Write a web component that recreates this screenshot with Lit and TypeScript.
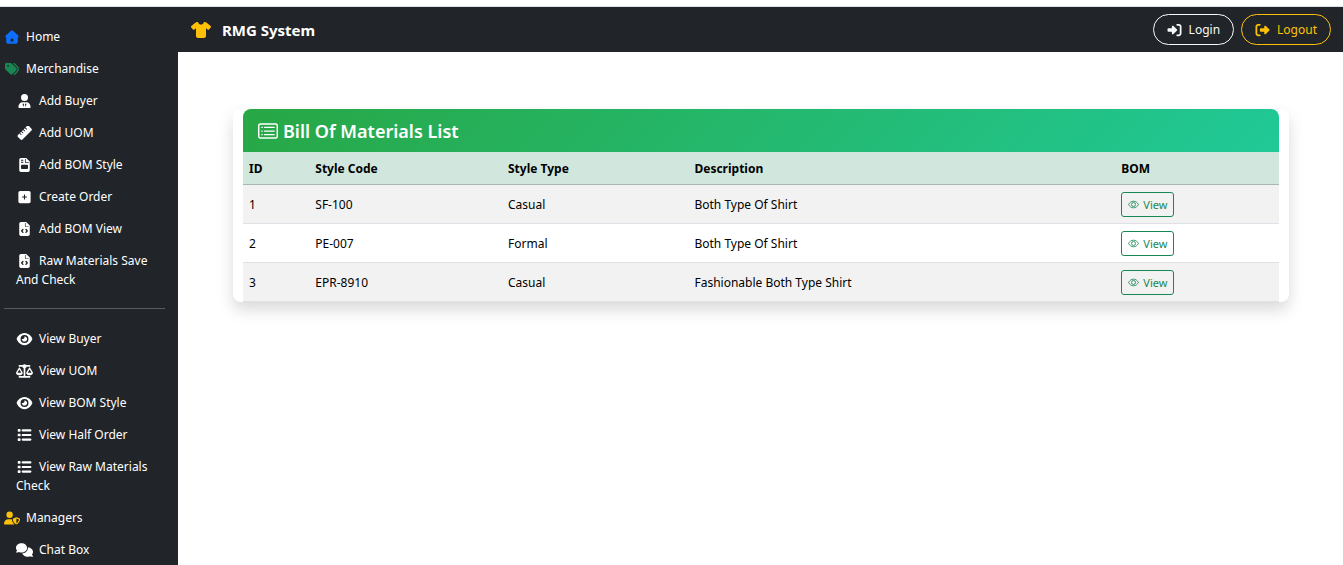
import { LitElement, html, css, svg, type SVGTemplateResult } from "lit";
import { customElement } from "lit/decorators.js";
import { classMap } from "lit/directives/class-map.js";

interface Icon {
  box: string;
  art: SVGTemplateResult;
}

const icons: Record<string, Icon> = {
  home: {
    box: "0 0 16 16",
    art: svg`<path fill-rule="evenodd" d="M8 .5c.4 0 .8.1 1.100.4l6 5.500c.8.7.5 1.900-.5 2.100v5.300c0 1-.8 1.800-1.800 1.800H3.200c-1 0-1.800-.8-1.800-1.800V8.500C.4 8.300.1 7.100.9 6.400l6-5.500C7.200.6 7.600.5 8 .5zM8 9.600a1.600 1.600 0 0 0-1.600 1.600v1.900h3.200v-1.900A1.600 1.600 0 0 0 8 9.600z"/>`,
  },
  tags: {
    box: "0 0 512 512",
    art: svg`<path d="M345 39.100 472.800 168.400c52.400 53 52.400 138.200 0 191.200L360.800 472.900c-9.300 9.400-24.500 9.500-33.900.2s-9.500-24.500-.2-33.900L438.600 325.900c33.900-34.300 33.900-89.400 0-123.700L310.900 72.900c-9.300-9.400-9.200-24.600.2-33.900s24.600-9.200 33.900.1zM0 229.500V80c0-26.500 21.500-48 48-48h149.500c17 0 33.300 6.700 45.300 18.700l168 168c25 25 25 65.500 0 90.500L277.300 442.700c-25 25-65.500 25-90.500 0l-168-168C6.700 262.700 0 246.500 0 229.500zM144 144a32 32 0 1 0-64 0 32 32 0 1 0 64 0z"/>`,
  },
  user: {
    box: "0 0 448 512",
    art: svg`<path fill-rule="evenodd" d="M96 128a128 128 0 1 0 256 0A128 128 0 1 0 96 128zM150 304h148c84 0 150 76 150 177.300 0 17-13.700 30.700-30.700 30.700H30.700C13.700 512 0 498.300 0 481.300 0 380 66 304 150 304zm2 50 28 118 26-84-22-44zm144 0-32-10-22 44 26 84z"/>`,
  },
  ruler: {
    box: "4 16 488 492",
    art: svg`<path d="M177.900 494.100c-18.700 18.700-49.100 18.700-67.900 0L17.900 401.900c-18.700-18.700-18.700-49.100 0-67.900l50.700-50.700 48 48c6.200 6.200 16.400 6.200 22.600 0s6.200-16.400 0-22.600l-48-48 41.400-41.400 48 48c6.200 6.200 16.400 6.200 22.600 0s6.200-16.400 0-22.600l-48-48 41.400-41.400 48 48c6.200 6.200 16.400 6.200 22.600 0s6.200-16.400 0-22.600l-48-48 41.400-41.400 48 48c6.200 6.200 16.400 6.200 22.600 0s6.200-16.400 0-22.600l-48-48 50.700-50.700c18.700-18.700 49.100-18.700 67.900 0l92.100 92.100c18.700 18.700 18.700 49.100 0 67.900L177.900 494.100z"/>`,
  },
  invoice: {
    box: "0 0 384 512",
    art: svg`<path fill-rule="evenodd" d="M64 0C28.700 0 0 28.700 0 64v384c0 35.300 28.700 64 64 64h256c35.300 0 64-28.700 64-64V128L256 0H64zM236 36v108h112v28H208V36zM64 64h84v32H64zm0 74h84v32H64zm32 108h192c18 0 32 14 32 32v96c0 18-14 32-32 32H96c-18 0-32-14-32-32v-96c0-18 14-32 32-32z"/>`,
  },
  plus: {
    box: "0 0 448 512",
    art: svg`<path fill-rule="evenodd" d="M64 32C28.700 32 0 60.700 0 96v320c0 35.300 28.700 64 64 64h320c35.300 0 64-28.700 64-64V96c0-35.300-28.700-64-64-64H64zm140 312v-68h-68v-40h68v-68h40v68h68v40h-68v68z"/>`,
  },
  code: {
    box: "0 0 384 512",
    art: svg`<path fill-rule="evenodd" d="M64 0C28.700 0 0 28.700 0 64v384c0 35.300 28.700 64 64 64h256c35.300 0 64-28.700 64-64V128L256 0H64zM232 40v112h112v24H208V40zM153 289l-31 39 31 39c8 10 6 25-4 34s-25 6-34-4l-48-56c-7-9-7-19 0-28l48-56c9-10 24-12 34-4s12 26 4 36zm112-32 48 56c7 9 7 19 0 28l-48 56c-9 10-24 12-34 4s-12-24-4-34l31-39-31-39c-8-10-6-25 4-34s25-8 34 2z"/>`,
  },
  eye: {
    box: "0 0 576 512",
    art: svg`<path d="M288 32c-80.800 0-145.500 36.800-192.600 80.600C48.600 156 17.300 208 2.500 243.700c-3.300 7.900-3.300 16.700 0 24.600C17.300 304 48.600 356 95.400 399.400 142.500 443.200 207.200 480 288 480s145.500-36.800 192.600-80.600c46.800-43.500 78.100-95.400 93-131.100 3.300-7.900 3.300-16.700 0-24.600-14.900-35.700-46.200-87.700-93-131.100C433.500 68.800 368.800 32 288 32zM144 256a144 144 0 1 1 288 0 144 144 0 1 1-288 0zm144-64c0 35.300-28.700 64-64 64-7.100 0-13.900-1.200-20.300-3.300-5.500-1.800-11.900 1.600-11.700 7.400.3 6.900 1.300 13.800 3.200 20.700 13.700 51.200 66.400 81.600 117.600 67.900s81.600-66.400 67.900-117.600c-11.100-41.500-47.800-69.400-88.600-71.100-5.800-.2-9.200 6.100-7.400 11.700 2.100 6.400 3.300 13.200 3.300 20.300z"/>`,
  },
  scale: {
    box: "0 0 640 512",
    art: svg`<path fill-rule="evenodd" d="M384 32h128c17.700 0 32 14.300 32 32s-14.300 32-32 32H398.400c-5.200 25.800-22.900 47.100-46.400 57.300V448h160c17.700 0 32 14.300 32 32s-14.300 32-32 32H128c-17.700 0-32-14.300-32-32s14.300-32 32-32h160V153.300c-23.500-10.300-41.200-31.600-46.400-57.300H128c-17.700 0-32-14.300-32-32s14.300-32 32-32h128c14.600-19.400 37.800-32 64-32s49.400 12.600 64 32zm55.600 288h144.900L512 195.800 439.600 320zM512 416c-62.900 0-115.200-34-126-78.900-2.600-11 1-22.300 6.700-32.100l95.200-163.200c5-8.600 14.200-13.800 24.100-13.800s19.100 5.300 24.100 13.800L631.300 305c5.700 9.800 9.300 21.100 6.700 32.100C627.200 382 574.900 416 512 416zM126.800 195.800 54.400 320h144.900L126.800 195.800zM.9 337.100c-2.600-11 1-22.300 6.700-32.100l95.200-163.200c5-8.600 14.200-13.800 24.100-13.800s19.100 5.300 24.100 13.800L246.200 305c5.700 9.800 9.300 21.100 6.700 32.100C242 382 189.700 416 126.800 416S11.700 382 .9 337.100z"/>`,
  },
  list: {
    box: "0 0 512 512",
    art: svg`<path d="M32 40h56c13 0 24 11 24 24v48c0 13-11 24-24 24H32c-13 0-24-11-24-24V64c0-13 11-24 24-24zm0 168h56c13 0 24 11 24 24v48c0 13-11 24-24 24H32c-13 0-24-11-24-24v-48c0-13 11-24 24-24zm0 168h56c13 0 24 11 24 24v48c0 13-11 24-24 24H32c-13 0-24-11-24-24v-48c0-13 11-24 24-24zM188 50h284a38 38 0 0 1 0 76H188a38 38 0 0 1 0-76zm0 168h284a38 38 0 0 1 0 76H188a38 38 0 0 1 0-76zm0 168h284a38 38 0 0 1 0 76H188a38 38 0 0 1 0-76z"/>`,
  },
  manager: {
    box: "0 0 640 512",
    art: svg`<path fill-rule="evenodd" d="M224 256A128 128 0 1 0 224 0a128 128 0 1 0 0 256zm-45.700 48C79.800 304 0 383.800 0 482.300 0 498.700 13.300 512 29.700 512h388.600c1.800 0 3.500-.2 5.300-.5-76.300-55.100-99.800-141-103.100-200.200-16.100-4.800-33.100-7.300-50.700-7.300h-91.500zm308.800-78.300-120 48C358 277.400 352 286.200 352 296c0 63.300 25.900 168.800 134.800 214.200 5.900 2.500 12.600 2.500 18.500 0C614.100 464.800 640 359.300 640 296c0-9.800-6-18.600-15.100-22.300l-120-48c-5.700-2.300-12.100-2.300-17.800 0zM591.400 312c-3.900 50.700-27.200 116.700-95.400 149.700V273.800L591.400 312z"/>`,
  },
  chat: {
    box: "0 0 640 512",
    art: svg`<path d="M208 352c114.900 0 208-78.800 208-176S322.900 0 208 0 0 78.800 0 176c0 38.600 14.700 74.300 39.600 103.400-3.500 9.400-8.700 17.700-14.200 24.700-4.800 6.200-9.700 11-13.300 14.300-1.800 1.600-3.300 2.900-4.300 3.700-7 5.200-9.600 14.300-6.800 22.200S11.300 352 20 352c21.800 0 43.800-5.600 62.100-12.500 9.200-3.500 17.800-7.400 25.200-11.400C136.500 343.300 171 352 208 352zm240-176c0 112.300-99.100 196.900-216.500 207C255.800 457.400 336.400 512 432 512c37 0 71.400-8.700 100.700-23.900 7.500 4 16 7.900 25.200 11.400 18.300 6.900 40.300 12.500 62.100 12.500 8.700 0 16.400-5.700 19.100-13.900s-.1-17.100-6.800-22.200c-1-.8-2.500-2-4.300-3.700-3.600-3.300-8.500-8.100-13.300-14.300-5.500-7-10.700-15.400-14.200-24.700 24.900-29 39.600-64.700 39.600-103.400 0-92.800-84.900-168.900-192.600-175.500.4 5.100.6 10.300.6 15.500z"/>`,
  },
  shirt: {
    box: "0 0 640 512",
    art: svg`<path d="M211.800 0c7.800 0 14.300 5.700 16.700 13.200C240.800 51.900 277.100 80 320 80s79.200-28.100 91.500-66.800C413.900 5.700 420.400 0 428.200 0h12.600c22.500 0 44.200 7.900 61.500 22.300l126 105c6.600 5.500 10.700 13.500 11.500 22.100s-2.100 17.100-7.800 23.600l-56 64c-11.400 13.100-31.200 14.600-44.600 3.500L480 197.700V448c0 35.300-28.700 64-64 64H224c-35.300 0-64-28.700-64-64V197.700l-51.500 42.900c-13.300 11.100-33.100 9.600-44.600-3.500l-56-64c-5.700-6.500-8.500-15-7.800-23.600s4.900-16.600 11.500-22.100l126-105C155 7.900 176.700 0 199.200 0h12.600z"/>`,
  },
  login: {
    box: "0 0 512 512",
    art: svg`<path d="m217.900 105.900 122.800 122.800c7.200 7.200 11.300 17.100 11.300 27.300s-4.100 20.100-11.300 27.300L217.900 406.100c-6.400 6.400-15 9.900-24 9.900-18.700 0-33.900-15.200-33.900-33.900V320H32c-17.700 0-32-14.300-32-32v-64c0-17.700 14.300-32 32-32h128v-62.100c0-18.700 15.200-33.900 33.900-33.900 9 0 17.600 3.600 24 9.900zM352 416h64c17.700 0 32-14.300 32-32V128c0-17.700-14.300-32-32-32h-64c-17.700 0-32-14.300-32-32s14.300-32 32-32h64c53 0 96 43 96 96v256c0 53-43 96-96 96h-64c-17.700 0-32-14.300-32-32s14.300-32 32-32z"/>`,
  },
  logout: {
    box: "0 0 512 512",
    art: svg`<path d="m377.900 105.900 122.800 122.800c7.200 7.200 11.300 17.100 11.300 27.300s-4.100 20.100-11.300 27.300L377.900 406.100c-6.400 6.400-15 9.900-24 9.900-18.700 0-33.900-15.200-33.900-33.900V320H192c-17.700 0-32-14.300-32-32v-64c0-17.700 14.300-32 32-32h128v-62.100c0-18.700 15.200-33.900 33.900-33.900 9 0 17.600 3.600 24 9.900zM160 96H96c-17.700 0-32 14.300-32 32v256c0 17.700 14.300 32 32 32h64c17.700 0 32 14.300 32 32s-14.300 32-32 32H96c-53 0-96-43-96-96V128c0-53 43-96 96-96h64c17.700 0 32 14.300 32 32s-14.300 32-32 32z"/>`,
  },
  rectList: {
    box: "0 0 576 512",
    art: svg`<path fill-rule="evenodd" d="M64 32h448c35 0 64 29 64 64v320c0 35-29 64-64 64H64c-35 0-64-29-64-64V96c0-35 29-64 64-64zm0 42c-12 0-22 10-22 22v320c0 12 10 22 22 22h448c12 0 22-10 22-22V96c0-12-10-22-22-22H64zm32 62h42v36H96zm80 0h304v36H176zM96 238h42v36H96zm80 0h304v36H176zM96 340h42v36H96zm80 0h304v36H176z"/>`,
  },
  eyeOutline: {
    box: "0 0 16 12",
    art: svg`<g fill="none" stroke="currentColor" stroke-width="1.200"><path d="M.8 6C2.400 3 5 1.200 8 1.200S13.600 3 15.200 6C13.600 9 11 10.800 8 10.800S2.400 9 .8 6z"/><circle cx="8" cy="6" r="2.900"/></g>`,
  },
};

const glyph = (name: string) =>
  svg`<svg class="icon ${name}" viewBox=${icons[name].box} fill="currentColor" aria-hidden="true">${icons[name].art}</svg>`;

interface NavItem {
  icon: string;
  label: string;
  tone?: "blue" | "green" | "amber";
}

const createLinks: NavItem[] = [
  { icon: "home", label: "Home", tone: "blue" },
  { icon: "tags", label: "Merchandise", tone: "green" },
  { icon: "user", label: "Add Buyer" },
  { icon: "ruler", label: "Add UOM" },
  { icon: "invoice", label: "Add BOM Style" },
  { icon: "plus", label: "Create Order" },
  { icon: "code", label: "Add BOM View" },
  { icon: "code", label: "Raw Materials Save And Check" },
];

const viewLinks: NavItem[] = [
  { icon: "eye", label: "View Buyer" },
  { icon: "scale", label: "View UOM" },
  { icon: "eye", label: "View BOM Style" },
  { icon: "list", label: "View Half Order" },
  { icon: "list", label: "View Raw Materials Check" },
  { icon: "manager", label: "Managers", tone: "amber" },
  { icon: "chat", label: "Chat Box" },
];

const materials = [
  { id: 1, code: "SF-100", type: "Casual", description: "Both Type Of Shirt" },
  { id: 2, code: "PE-007", type: "Formal", description: "Both Type Of Shirt" },
  { id: 3, code: "EPR-8910", type: "Casual", description: "Fashionable Both Type Shirt" },
];

@customElement("side-nav")
export class SideNav extends LitElement {
  static styles = css`
    :host {
      display: block;
      box-sizing: border-box;
      padding: 14px 13px 0 4px;
      background: #212529;
      color: #fff;
      font-size: 12px;
      line-height: 19px;
      overflow: hidden;
    }
    .links {
      display: flex;
      flex-direction: column;
      gap: 1px;
      margin: 0;
      padding: 0;
      list-style: none;
    }
    .link {
      display: block;
      padding: 6px 0 6px 12px;
      color: inherit;
      text-decoration: none;
    }
    .link.top {
      padding-left: 0;
    }
    .icon {
      width: 17px;
      height: 14px;
      margin-right: 6px;
      vertical-align: -3px;
    }
    .top .icon {
      width: 16px;
    }
    .blue .icon {
      color: #0d6efd;
    }
    .green .icon {
      color: #198754;
    }
    .amber .icon {
      color: #ffc107;
    }
    .rule {
      margin: 13px 0 14px;
      border: 0;
      border-top: 1px solid #585c5f;
    }
  `;

  private links(items: NavItem[]) {
    return html`<ul class="links">
      ${items.map(
        (item) => html`<li>
          <a
            href="#"
            class=${classMap({
              link: true,
              top: !!item.tone,
              [item.tone ?? "plain"]: true,
            })}
            >${glyph(item.icon)}${item.label}</a
          >
        </li>`
      )}
    </ul>`;
  }

  render() {
    return html`<nav aria-label="Main">
      ${this.links(createLinks)}
      <hr class="rule" />
      ${this.links(viewLinks)}
    </nav>`;
  }
}

@customElement("top-bar")
export class TopBar extends LitElement {
  static styles = css`
    :host {
      display: flex;
      align-items: center;
      justify-content: space-between;
      box-sizing: border-box;
      height: 45px;
      padding: 0 12px;
      background: #212529;
    }
    .brand {
      display: flex;
      align-items: center;
      gap: 10px;
      color: #fff;
      font-size: 15px;
      font-weight: 700;
      text-decoration: none;
    }
    .shirt {
      width: 22px;
      height: 16px;
      color: #ffc107;
    }
    .actions {
      display: flex;
      gap: 7px;
    }
    .action {
      display: flex;
      align-items: center;
      gap: 7px;
      height: 31px;
      padding: 0 13px;
      border: 1px solid currentColor;
      border-radius: 16px;
      background: transparent;
      color: #f8f9fa;
      font: inherit;
      font-size: 12px;
    }
    .action.warn {
      color: #ffc107;
    }
    .action .icon {
      width: 15px;
      height: 14px;
    }
  `;

  render() {
    return html`
      <a class="brand" href="#">${glyph("shirt")}RMG System</a>
      <div class="actions">
        <button class="action" type="button">${glyph("login")}Login</button>
        <button class="action warn" type="button">${glyph("logout")}Logout</button>
      </div>
    `;
  }
}

@customElement("materials-card")
export class MaterialsCard extends LitElement {
  static styles = css`
    :host {
      display: block;
      padding: 0 10px;
      border-radius: 8px;
      background: #fff;
      box-shadow: 0 8px 16px rgba(0, 0, 0, 0.15);
    }
    .title {
      display: flex;
      align-items: center;
      gap: 5px;
      height: 43px;
      margin: 0;
      padding: 0 15px;
      border-radius: 8px 8px 0 0;
      background: linear-gradient(135deg, #28a745, #20c997);
      color: #fff;
      font-size: 18px;
      font-weight: 600;
    }
    .rectList {
      width: 20px;
      height: 18px;
    }
    .table {
      width: 100%;
      table-layout: fixed;
      border-collapse: separate;
      border-spacing: 0;
      color: #000;
      font-size: 12px;
      line-height: 19px;
      text-align: left;
    }
    th,
    td {
      box-sizing: border-box;
      padding: 0 6px;
    }
    th {
      height: 33px;
      border-bottom: 1px solid #a7b9b1;
      background: #d1e7dd;
      font-weight: 700;
    }
    td {
      height: 39px;
      border-bottom: 1px solid #dee2e6;
    }
    tbody tr:nth-child(odd) {
      background: #f2f2f2;
    }
    .id {
      width: 6.4%;
    }
    .code {
      width: 18.6%;
    }
    .type {
      width: 18%;
    }
    .description {
      width: 41.2%;
    }
    .view {
      display: inline-flex;
      align-items: center;
      gap: 4px;
      box-sizing: border-box;
      height: 25px;
      padding: 0 6px;
      border: 1px solid #198754;
      border-radius: 3px;
      color: #198754;
      font-size: 11px;
      text-decoration: none;
      vertical-align: middle;
    }
    .eyeOutline {
      width: 11px;
      height: 9px;
    }
  `;

  render() {
    return html`
      <h2 class="title">${glyph("rectList")}Bill Of Materials List</h2>
      <table class="table">
        <thead>
          <tr>
            <th class="id" scope="col">ID</th>
            <th class="code" scope="col">Style Code</th>
            <th class="type" scope="col">Style Type</th>
            <th class="description" scope="col">Description</th>
            <th scope="col">BOM</th>
          </tr>
        </thead>
        <tbody>
          ${materials.map(
            (row) => html`<tr>
              <td>${row.id}</td>
              <td>${row.code}</td>
              <td>${row.type}</td>
              <td>${row.description}</td>
              <td><a class="view" href="#">${glyph("eyeOutline")}View</a></td>
            </tr>`
          )}
        </tbody>
      </table>
    `;
  }
}

@customElement("app-root")
export class AppRoot extends LitElement {
  static styles = css`
    :host {
      display: grid;
      grid-template-columns: 178px 1fr;
      grid-template-rows: auto 1fr;
      box-sizing: border-box;
      height: 100vh;
      overflow: hidden;
      background: #fff;
      font-family: "Segoe UI", "Noto Sans", "Open Sans", sans-serif;
    }
    .strip {
      grid-column: 1 / -1;
      height: 6px;
      border-bottom: 1px solid #dee2e6;
    }
    .page {
      min-width: 0;
    }
    .content {
      padding: 57px 54px 0 55px;
    }
  `;

  render() {
    return html`
      <div class="strip"></div>
      <side-nav></side-nav>
      <div class="page">
        <top-bar></top-bar>
        <main class="content"><materials-card></materials-card></main>
      </div>
    `;
  }
}
